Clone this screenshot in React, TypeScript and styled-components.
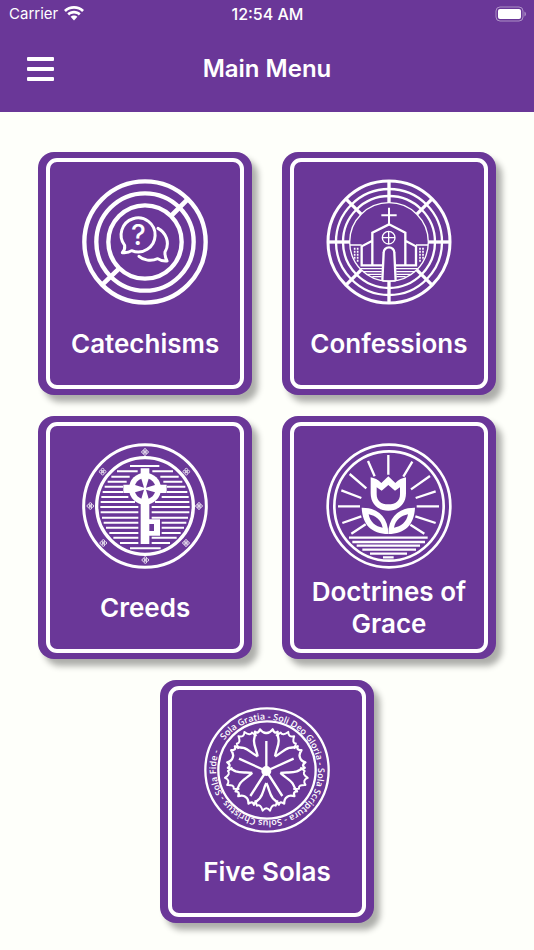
import React from "react";
import styled, { createGlobalStyle } from "styled-components";

const PURPLE = "#6a3798";
const PAPER = "#fefffa";

const GlobalStyle = createGlobalStyle`
  * { box-sizing: border-box; }
  body {
    margin: 0;
    background: ${PAPER};
    font-family: Inter, "Liberation Sans", sans-serif;
    color: #fff;
  }
`;

const Header = styled.header`
  background: ${PURPLE};
`;

const StatusBar = styled.div`
  display: grid;
  grid-template-columns: 1fr auto 1fr;
  align-items: center;
  height: 27px;
  padding: 0 8px 0 9px;
  font-size: 15px;
`;

const Carrier = styled.span`
  display: flex;
  align-items: center;
  gap: 6px;
`;

const Clock = styled.span`
  font-size: 16px;
  font-weight: 500;
`;

const Battery = styled.svg`
  justify-self: end;
`;

const NavBar = styled.div`
  display: grid;
  grid-template-columns: 1fr auto 1fr;
  align-items: center;
  height: 85px;
  padding: 0 24px 1px;
`;

const MenuButton = styled.button`
  display: flex;
  justify-self: start;
  padding: 3px;
  border: 0;
  background: none;
  color: inherit;
  cursor: pointer;
`;

const Title = styled.h1`
  margin: 0;
  font-size: 24px;
  font-weight: 600;
  line-height: 32px;
`;

const Menu = styled.main`
  display: flex;
  flex-wrap: wrap;
  justify-content: center;
  gap: 21px 30px;
  padding: 40px 24px 24px;
`;

const Card = styled.button`
  width: 44%;
  min-width: 200px;
  max-width: 280px;
  padding: 6px 8px;
  border: 0;
  border-radius: 16px;
  background: ${PURPLE};
  box-shadow: 6px 7px 6px rgba(0, 0, 0, 0.32);
  color: inherit;
  font: inherit;
  cursor: pointer;
`;

const CardFrame = styled.span`
  display: flex;
  flex-direction: column;
  align-items: center;
  gap: 6px;
  padding: 17px 4px 8px;
  border: 4px solid #fff;
  border-radius: 11px;
`;

const Emblem = styled.svg`
  display: block;
  width: 126px;
  height: 126px;
  fill: none;
  stroke: #fff;
`;

const CardLabel = styled.span`
  display: flex;
  align-items: center;
  justify-content: center;
  min-height: 66px;
  font-size: 26px;
  font-weight: 600;
  line-height: 32px;
  text-align: center;
`;

const RingText = styled.text`
  font-family: "Open Sans", sans-serif;
  font-size: 27px;
  font-weight: 600;
  fill: #fff;
  stroke: none;
`;

const QuestionMark = styled.text`
  font-family: Inter, sans-serif;
  font-size: 84px;
  font-weight: 500;
  fill: #fff;
  stroke: none;
`;

const emblemBox = "21 19 378 378";

function CatechismsEmblem() {
  return (
    <Emblem viewBox="21 21 378 378" aria-hidden="true">
      <g strokeWidth="13">
        <circle cx="210" cy="210" r="182" />
        <circle cx="210" cy="210" r="146" />
        <circle cx="210" cy="210" r="110" />
        <path d="M288 132L340 80M132 290L82 338" strokeWidth="14" />
      </g>
      <g strokeWidth="9" strokeLinejoin="round" strokeLinecap="round">
        <path d="M149 220A51 51 0 1 1 170 236C162 242 153 243 142 242C149 235 150 228 149 220Z" />
        <path d="M249 169C273 181 286 213 270 240C269 251 272 259 276 267C265 268 256 266 248 260C228 269 205 265 192 253" />
      </g>
      <QuestionMark x="190" y="220" textAnchor="middle">?</QuestionMark>
    </Emblem>
  );
}

function ConfessionsEmblem() {
  const spokes = [0, 45, 90, 135, 180, 225, 270, 315];
  return (
    <Emblem viewBox={emblemBox} aria-hidden="true">
      <circle cx="210" cy="208" r="183" strokeWidth="9" />
      <circle cx="210" cy="208" r="159" strokeWidth="7" />
      <circle cx="210" cy="208" r="138" strokeWidth="7" />
      <circle cx="210" cy="208" r="118" strokeWidth="4" />
      {spokes.map((a) => (
        <path key={a} d="M210 25V90" strokeWidth="10" transform={`rotate(${a} 210 208)`} />
      ))}
      <path d="M210 105V158M187 128H233" strokeWidth="6" />
      <path
        d="M160 278V180L210 155L259 180V278M160 204L128 221V278H192M259 204L291 221V278H228"
        strokeWidth="7"
      />
      <path d="M190 325L194 240A16 16 0 0 1 226 240L230 325" strokeWidth="7" />
      <g strokeWidth="4">
        <circle cx="209" cy="195" r="19" />
        <path d="M209 176V214M190 195H228" />
        <path d="M93 217H128M291 217H327M190 325H230" />
        <path d="M124 288H190M230 288H296M132 297H188M232 297H288M143 305H188M232 305H277M160 312H188M232 312H260" />
      </g>
      <path
        d="M107 225V262M116 225V268M303 225V268M312 225V262"
        strokeWidth="5"
        strokeDasharray="6 3"
      />
    </Emblem>
  );
}

function CreedsEmblem() {
  const rosettes = [
    [210, 46], [334, 105], [372, 208], [333, 319],
    [211, 370], [85, 319], [46, 208], [83, 105],
  ];
  const lines: [number, number, number][] = [
    [104, 22, 22], [120, 46, 46], [135, 55, 55], [150, 66, 66], [166, 66, 66],
    [181, 50, 50], [196, 30, 30], [211, 20, 20], [227, 20, 20], [243, 20, 20],
    [258, 20, 50], [273, 20, 50], [289, 20, 50], [303, 20, 20], [319, 20, 20],
  ];
  return (
    <Emblem viewBox={emblemBox} aria-hidden="true">
      <circle cx="210" cy="208" r="184" strokeWidth="9" />
      <circle cx="210" cy="208" r="145" strokeWidth="10" />
      {rosettes.map(([x, y]) => (
        <g key={`${x}-${y}`} strokeWidth="3" opacity="0.8" transform={`translate(${x} ${y})`}>
          <circle cy="-6" r="4" />
          <circle cy="6" r="4" />
          <circle cx="-6" r="4" />
          <circle cx="6" r="4" />
          <circle r="3" />
        </g>
      ))}
      <g strokeWidth="6">
        <path d="M165 88H253M165 335H257" />
        {lines.map(([y, left, right]) => {
          const half = Math.round(Math.sqrt(134 * 134 - (y - 208) * (y - 208)));
          return <path key={y} d={`M${210 - half} ${y}H${210 - left}M${210 + right} ${y}H${210 + half}`} />;
        })}
      </g>
      <g fill="#fff" stroke="none">
        <circle cx="210" cy="156" r="48" />
        <path d="M197 95H223V115H197ZM145 144H168V169H145ZM252 144H275V169H252Z" />
        <path d="M197 190H223V248H255V297H223V322H197Z" />
      </g>
      <g fill={PURPLE} stroke="none">
        {[0, 90, 180, 270].map((a) => (
          <path key={a} d="M213 153L221 126A32 32 0 0 1 240 145Z" transform={`rotate(${a} 210 156)`} />
        ))}
        <path d="M223 262H237V283H223Z" />
      </g>
    </Emblem>
  );
}

function GraceEmblem() {
  return (
    <Emblem viewBox={emblemBox} aria-hidden="true">
      <circle cx="210" cy="208" r="184" strokeWidth="8" />
      <circle cx="210" cy="208" r="164" strokeWidth="8" />
      <path
        strokeWidth="7"
        d="M208 55V114M147 73L167 119M92 112L142 155M67 161L127 184M57 209H123M70 259L127 239M97 291L140 263M280 75L253 120M333 118L276 158M350 164L290 184M360 209H293M350 259L289 239M316 291L274 264"
      />
      <path
        strokeWidth="7"
        d="M90 303H326M100 316H318M113 327H303M130 339H291M153 351H264M192 362H224"
      />
      <g fill="#fff" stroke="none" fillRule="evenodd">
        <path d="M155 122C165 124 178 129 187 139L208 119L229 139C238 129 251 124 261 122V170C261 201 240 222 208 222C176 222 155 201 155 170ZM173 152V172C173 193 186 203 208 203C230 203 243 193 243 172V152L228 162L208 145L188 162Z" />
        <path d="M128 213C174 212 208 240 208 292C157 292 130 263 128 213ZM149 233C153 256 170 270 191 273C186 249 170 237 149 233Z" />
        <path d="M288 213C242 212 208 240 208 292C259 292 286 263 288 213ZM267 233C263 256 246 270 225 273C230 249 246 237 267 233Z" />
      </g>
    </Emblem>
  );
}

function SolasEmblem() {
  const turns = [0, 72, 144, 216, 288];
  return (
    <Emblem viewBox={emblemBox} aria-hidden="true">
      <circle cx="210" cy="208" r="185" strokeWidth="7" />
      <circle cx="210" cy="208" r="146" strokeWidth="7" />
      <path id="solas-ring" stroke="none" d="M82 119A156 156 0 0 1 338 297A156 156 0 0 1 82 119" />
      <RingText>
        <textPath href="#solas-ring">
          Sola Gratia - Soli Deo Gloria - Sola Scriptura - Solus Christus - Sola Fide -
        </textPath>
      </RingText>
      <g transform="translate(208 203)" strokeWidth="7" strokeLinejoin="round">
        {turns.map((a) => (
          <g key={a} transform={`rotate(${a})`}>
            <path d="M-26 -36C-29 -55 -38 -68 -37 -84C-36 -94 -33 -99 -34 -110Q-24 -102 -19 -117Q-10 -105 0 -106Q10 -105 19 -117Q24 -102 34 -110C33 -99 36 -94 37 -84C38 -68 29 -55 26 -36" />
            <path
              d="M-34 -96L-28 -112Q-17 -106 -11 -127Q0 -113 11 -127Q17 -106 28 -112L34 -96"
              strokeWidth="6"
              transform="rotate(36)"
            />
          </g>
        ))}
      </g>
      <path
        strokeWidth="7"
        d="M208 211V121M208 211L126 174M208 211L290 174M208 211L160 286M208 211L256 286"
      />
      <circle cx="208" cy="211" r="15" fill="#fff" stroke="none" />
    </Emblem>
  );
}

const entries = [
  { label: "Catechisms", Art: CatechismsEmblem },
  { label: "Confessions", Art: ConfessionsEmblem },
  { label: "Creeds", Art: CreedsEmblem },
  { label: "Doctrines of Grace", Art: GraceEmblem },
  { label: "Five Solas", Art: SolasEmblem },
];

export default function App() {
  return (
    <>
      <GlobalStyle />
      <Header>
        <StatusBar>
          <Carrier>
            Carrier
            <svg width="20" height="15" viewBox="0 0 20 15" fill="#fff" aria-hidden="true">
              <path d="M10 0C6.200 0 2.700 1.500 0 4L1.900 6C4 4 6.900 2.800 10 2.800S16 4 18.100 6L20 4C17.300 1.500 13.800 0 10 0Z" />
              <path d="M10 4.800C7.400 4.800 5.100 5.800 3.300 7.400L5.200 9.400C6.500 8.200 8.200 7.500 10 7.500S13.500 8.200 14.800 9.400L16.700 7.400C14.900 5.800 12.600 4.800 10 4.800Z" />
              <path d="M10 9.400C8.700 9.400 7.500 9.900 6.600 10.800L10 14.400L13.400 10.800C12.500 9.900 11.300 9.400 10 9.400Z" />
            </svg>
          </Carrier>
          <Clock>12:54 AM</Clock>
          <Battery width="31" height="16" viewBox="0 0 31 16" aria-hidden="true">
            <rect x="1" y="1" width="27" height="14" rx="4" fill="none" stroke="#fff" strokeOpacity="0.45" />
            <rect x="3" y="3" width="23" height="10" rx="2" fill="#fff" />
            <path d="M29.500 5.500V10.500C31.300 9.500 31.300 6.500 29.500 5.500Z" fill="#fff" fillOpacity="0.5" />
          </Battery>
        </StatusBar>
        <NavBar>
          <MenuButton type="button" aria-label="Open menu">
            <svg width="27" height="24" viewBox="0 0 27 24" fill="#fff" aria-hidden="true">
              <rect width="27" height="4" rx="1" />
              <rect y="10" width="27" height="4" rx="1" />
              <rect y="20" width="27" height="4" rx="1" />
            </svg>
          </MenuButton>
          <Title>Main Menu</Title>
        </NavBar>
      </Header>
      <Menu>
        {entries.map(({ label, Art }) => (
          <Card key={label} type="button">
            <CardFrame>
              <Art />
              <CardLabel>{label}</CardLabel>
            </CardFrame>
          </Card>
        ))}
      </Menu>
    </>
  );
}
